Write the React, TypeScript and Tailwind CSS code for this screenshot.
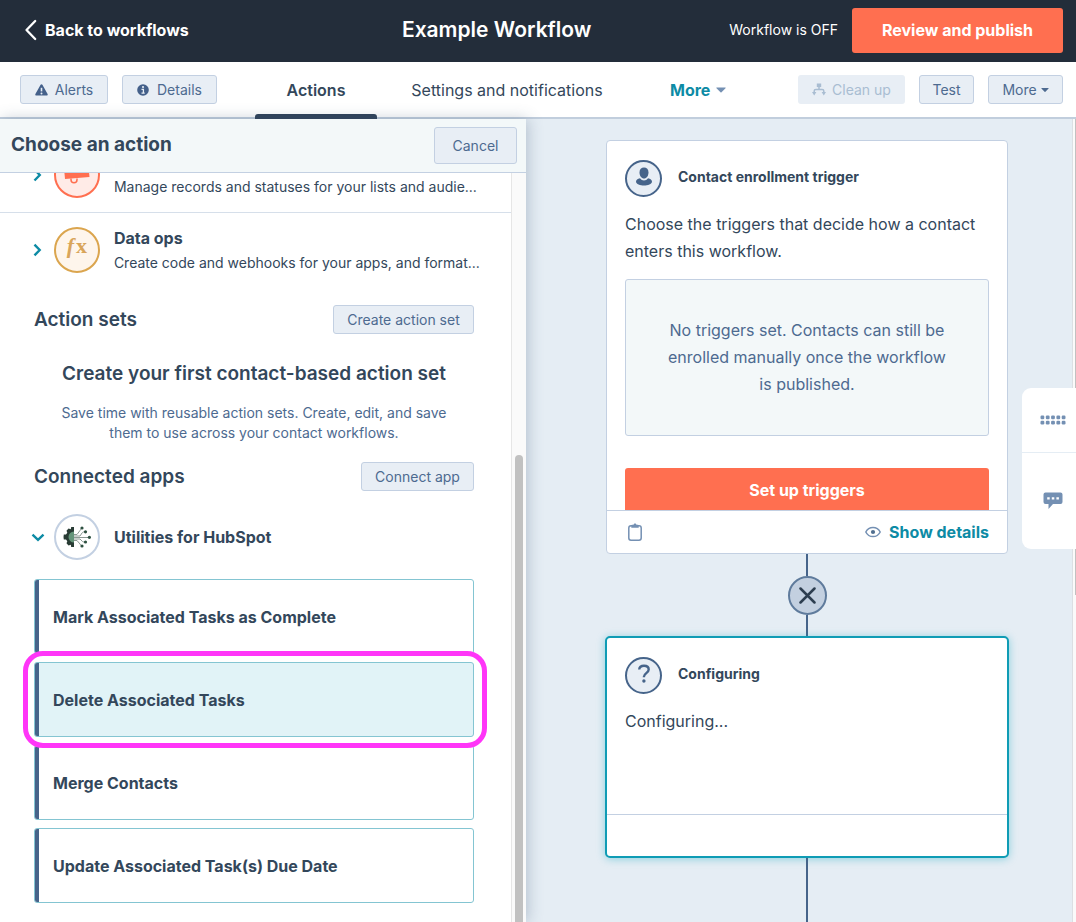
import React, { useState } from "react";

const softButton =
  "flex items-center justify-center rounded-[3px] border border-[#c3d0e2] bg-[#e8eef5] text-sm text-[#4d6a90] cursor-pointer";

const actions = [
  "Mark Associated Tasks as Complete",
  "Delete Associated Tasks",
  "Merge Contacts",
  "Update Associated Task(s) Due Date",
];

const Caret = ({ className = "" }: { className?: string }) => (
  <svg width="10" height="6" viewBox="0 0 10 6" className={className} aria-hidden="true">
    <path d="M0.8 0.5h8.4c.5 0 .6.4.3.7L5.5 5.2a.7.7 0 0 1-1 0L.5 1.2C.2.9.3.5.8.5z" fill="currentColor" />
  </svg>
);

const AlertIcon = () => (
  <svg width="13" height="12" viewBox="0 0 13 12" aria-hidden="true">
    <path d="M5.6.7a1 1 0 0 1 1.8 0l5.2 9.3c.4.8 0 1.6-.9 1.6H1.3c-.9 0-1.3-.8-.9-1.6z" fill="#44608a" />
    <path d="M6.5 3.8v3.6" stroke="#e8eef5" strokeWidth="1.6" />
    <circle cx="6.5" cy="9.5" r="1" fill="#e8eef5" />
  </svg>
);

const InfoIcon = () => (
  <svg width="12" height="12" viewBox="0 0 12 12" aria-hidden="true">
    <circle cx="6" cy="6" r="5.8" fill="#44608a" />
    <circle cx="6" cy="3" r="1.1" fill="#e8eef5" />
    <path d="M4.5 5.4h1.9v3.6M4.5 9.1h3.2" stroke="#e8eef5" strokeWidth="1.3" fill="none" />
  </svg>
);

const CleanUpIcon = () => (
  <svg width="14" height="13" viewBox="0 0 14 13" fill="none" aria-hidden="true">
    <path d="M4.8.5h4.4v3.6H4.8z" fill="#a9bdd2" />
    <path d="M7 3.5v3M2.2 9.500V8c0-1 .6-1.600 1.600-1.600h6.400c1 0 1.600.600 1.600 1.600v1.500" stroke="#a9bdd2" strokeWidth="1.500" />
    <path d="M0 9h4.400L2.200 12.500zM9.600 9H14l-2.200 3.500z" fill="#a9bdd2" />
  </svg>
);

const ChevronRight = () => (
  <svg width="9" height="14" viewBox="0 0 9 14" fill="none" aria-hidden="true">
    <path d="M1.5 1.5 6.800 7l-5.300 5.500" stroke="#0d8ba5" strokeWidth="2.400" />
  </svg>
);

const ChevronDown = () => (
  <svg width="14" height="9" viewBox="0 0 14 9" fill="none" aria-hidden="true">
    <path d="M1.500 1.700 7 6.800l5.500-5.100" stroke="#0d8ba5" strokeWidth="2.400" />
  </svg>
);

const MegaphoneIcon = () => (
  <svg width="30" height="28" viewBox="0 0 30 28" aria-hidden="true">
    <path d="M2 7 26 2l1.500 14L3 18z" fill="#ff6f50" />
    <path d="M9 17.500v1.200a3 3 0 0 0 6 0v-1.200" fill="none" stroke="#ff6f50" strokeWidth="1.500" />
  </svg>
);

const GearNetworkIcon = () => (
  <svg width="28" height="22" viewBox="0 0 28 22" fill="none" aria-hidden="true">
    <path d="M11 1v20H8.200L7.800 18.800 5.500 19.500 3.500 17.200l.800-2L3 13.500H.800L.500 11l.300-2.500H3l1.300-1.700-.800-2 2-2.300 2.300.700L8.200 1z" fill="#283b34" />
    <path d="M11 5.500v11a5.500 5.500 0 0 1 0-11z" fill="#64957a" />
    <g stroke="#8c9994" strokeWidth="1">
      <path d="M11 8.500h3l3-4c1-1.500 1-2 2-2.500M11 10h6l2-3c.800-1 1.500-1.200 3.500-1.200M11 11.500h15M11 13h6l2 2c.800 1 1.500 1 3.500 1M11 14.500h3l3 3.500c1 1.500 1 1.500 2 2" />
    </g>
    <g fill="#2d5040">
      <circle cx="19" cy="2" r="1.600" />
      <circle cx="22.500" cy="5.800" r="1.600" />
      <circle cx="26.400" cy="11.300" r="1.600" />
      <circle cx="22.500" cy="16" r="1.600" />
      <circle cx="19" cy="20" r="1.600" />
    </g>
  </svg>
);

const PersonIcon = () => (
  <svg width="18" height="20" viewBox="0 0 18 20" fill="#46648a" className="mb-1" aria-hidden="true">
    <path d="M9 .500c2.700 0 4.500 1.900 4.500 4.900 0 3.300-2 6.100-4.500 6.100S4.500 8.700 4.500 5.400C4.500 2.400 6.300.500 9 .500z" />
    <path d="M5 11.300c1.200 1.500 2.500 2.200 4 2.200s2.800-.700 4-2.200c2.500.400 4 1.700 4 3.500 0 2.400-4.300 3.700-8 3.700s-8-1.300-8-3.700c0-1.800 1.500-3.100 4-3.500z" />
  </svg>
);

const QuestionIcon = () => (
  <svg width="14" height="20" viewBox="0 0 14 20" fill="none" className="mb-1" aria-hidden="true">
    <path d="M2.200 5.500C2.400 3 4.400 1.700 7 1.700c2.700 0 4.700 1.400 4.700 3.800 0 3.600-4.800 3.600-4.800 7.200v.500" stroke="#46648a" strokeWidth="2.400" />
    <circle cx="6.900" cy="17" r="1.700" fill="#46648a" />
  </svg>
);

const ClipboardIcon = () => (
  <svg width="14" height="18" viewBox="0 0 14 18" fill="none" aria-hidden="true">
    <rect x="0.800" y="2.800" width="12.400" height="14.400" rx="2.200" stroke="#7490b3" strokeWidth="1.500" />
    <path d="M3.300 4.800V3c0-.700.500-1.200 1.200-1.200h1C5.800.900 6.300.500 7 .500s1.200.400 1.500 1.300h1c.700 0 1.200.500 1.200 1.200v1.800z" fill="#7490b3" />
  </svg>
);

const EyeIcon = () => (
  <svg width="16" height="12" viewBox="0 0 16 12" fill="none" aria-hidden="true">
    <path d="M.800 6C2.400 2.800 4.900 1.400 8 1.400S13.600 2.800 15.200 6c-1.600 3.200-4.100 4.600-7.200 4.600S2.400 9.200.800 6z" stroke="#7490b3" strokeWidth="1.500" />
    <circle cx="8" cy="6" r="2.100" fill="#516f90" />
  </svg>
);

const KeypadIcon = () => (
  <svg width="26" height="10" viewBox="0 0 26 10" fill="#7490b3" aria-hidden="true">
    {[0, 1, 2, 3, 4].map((i) => (
      <g key={i}>
        <rect x={0.5 + i * 5.3} y="0.500" width="3.800" height="3.800" rx="1.200" />
        <rect x={0.5 + i * 5.3} y="5.700" width="3.800" height="3.800" rx="1.200" />
      </g>
    ))}
  </svg>
);

const ChatIcon = () => (
  <svg width="20" height="18" viewBox="0 0 20 18" aria-hidden="true">
    <path d="M2.500.500h15a2 2 0 0 1 2 2V10a2 2 0 0 1-2 2H10l-4.500 5v-5h-3a2 2 0 0 1-2-2V2.500a2 2 0 0 1 2-2z" fill="#7490b3" />
    <path d="M4.200 5.200h2.500v2.300H4.200zM8.800 5.200h2.500v2.300H8.800zM13.400 5.200h2.500v2.300h-2.500z" fill="#fff" />
  </svg>
);

const TopBar = () => (
  <header className="flex h-[62px] shrink-0 items-center bg-[#232d3a] pr-[13px] pb-0.5 text-white">
    <div className="w-[264px] pl-6">
      <a href="#workflows" className="flex items-center gap-2 text-base font-bold whitespace-nowrap">
        <svg width="13" height="22" viewBox="0 0 13 22" fill="none" aria-hidden="true">
          <path d="M11.200 2 2.500 11l8.700 9" stroke="#fff" strokeWidth="2.300" strokeLinecap="round" strokeLinejoin="round" />
        </svg>
        Back to workflows
      </a>
    </div>
    <h1 className="flex-1 text-center text-[21px] font-semibold">Example Workflow</h1>
    <span className="mr-[14px] text-sm">Workflow is OFF</span>
    <button className="h-[45px] w-[211px] cursor-pointer rounded-[3px] bg-[#ff6f50] text-base font-bold">
      Review and publish
    </button>
  </header>
);

const Toolbar = () => (
  <nav className="flex h-[57px] shrink-0 items-center border-b-2 border-[#c1cedd] bg-white pr-[13px] pl-5 text-[#33475b]">
    <button className={`${softButton} h-[29px] w-[88px] gap-[7px]`}>
      <AlertIcon />
      Alerts
    </button>
    <button className={`${softButton} ml-[14px] h-[29px] w-[95px] gap-2`}>
      <InfoIcon />
      Details
    </button>
    <a href="#actions" className="relative ml-[38px] flex h-full w-[122px] items-center justify-center text-base font-semibold">
      Actions
      <span className="absolute inset-x-0 -bottom-0.5 h-[5px] rounded-t-[3px] bg-[#2f4259]" />
    </a>
    <a href="#settings" className="ml-8 w-[196px] text-center text-base whitespace-nowrap">
      Settings and notifications
    </a>
    <button className="ml-[65px] flex cursor-pointer items-center gap-1.5 text-base font-bold text-[#0d8ba5]">
      More
      <Caret className="text-[#7490b3]" />
    </button>
    <div className="ml-auto flex gap-[14px]">
      <button disabled className="flex h-[29px] w-[107px] items-center justify-center gap-1.5 rounded-[3px] bg-[#e8eef5] text-sm text-[#a9bdd2]">
        <CleanUpIcon />
        Clean up
      </button>
      <button className={`${softButton} h-[29px] w-[55px]`}>Test</button>
      <button className={`${softButton} h-[29px] w-[75px] gap-1`}>
        More
        <Caret className="w-2" />
      </button>
    </div>
  </nav>
);

const ActionPanel = () => {
  const [selected, setSelected] = useState<string>("Delete Associated Tasks");

  return (
    <aside className="z-10 flex w-[526px] shrink-0 flex-col bg-white shadow-[2px_0_14px_rgba(66,91,118,0.3)]">
      <div className="flex h-[54px] shrink-0 items-center justify-between border-b border-[#c3d0e2] bg-[#f3f8f9] pr-[9px] pl-[11px]">
        <h2 className="text-[19px] font-bold">Choose an action</h2>
        <button className={`${softButton} h-[37px] w-[83px]`}>Cancel</button>
      </div>

      <div className="flex min-h-0 flex-1">
        <div className="min-w-0 flex-1 overflow-hidden">
          {/* top row is scrolled halfway under the panel header */}
          <div className="flex h-10 items-end overflow-hidden border-b border-[#d6dfea]">
            <div className="flex h-[75px] w-full shrink-0 items-center pr-9 pl-[33px]">
              <ChevronRight />
              <div className="ml-3 flex size-[46px] shrink-0 items-center justify-center rounded-full border-2 border-[#ff6f50] bg-[#ffebe7]">
                <MegaphoneIcon />
              </div>
              <div className="ml-[14px] min-w-0 pt-6">
                <div className="text-sm leading-[25px] whitespace-nowrap">Manage records and statuses for your lists and audie...</div>
              </div>
            </div>
          </div>

          <div className="flex h-[74px] items-center pr-9 pl-[33px]">
            <ChevronRight />
            <div className="ml-3 flex size-[46px] shrink-0 items-center justify-center rounded-full border-2 border-[#dba54e] bg-[#fef5ec]">
              <span className="pb-2 font-['Liberation_Serif',serif] text-[22px] leading-6 font-bold text-[#d9a55a]">
                <i className="mr-0.5">f</i>x
              </span>
            </div>
            <div className="ml-[14px] min-w-0">
              <div className="text-base leading-6 font-bold">Data ops</div>
              <div className="text-sm leading-[25px] whitespace-nowrap">Create code and webhooks for your apps, and format...</div>
            </div>
          </div>

          <section className="pr-[37px] pl-[34px]">
            <div className="mt-[18px] flex items-center justify-between">
              <h3 className="text-[19px] leading-7 font-semibold">Action sets</h3>
              <button className={`${softButton} h-[29px] w-[141px]`}>Create action set</button>
            </div>
            <div className="mt-[26px] text-center">
              <h4 className="text-[19px] leading-7 font-semibold">Create your first contact-based action set</h4>
              <p className="mt-[15px] text-sm leading-5 text-[#4d6a90]">
                Save time with reusable action sets. Create, edit, and save
                <br />
                them to use across your contact workflows.
              </p>
            </div>
          </section>

          <section className="pr-[37px] pl-[34px]">
            <div className="mt-[19px] flex items-center justify-between">
              <h3 className="text-[19px] leading-7 font-semibold">Connected apps</h3>
              <button className={`${softButton} h-[29px] w-[113px]`}>Connect app</button>
            </div>
            <button className="mt-[23px] flex cursor-pointer items-center text-base font-bold">
              <span className="-ml-[3px]">
                <ChevronDown />
              </span>
              <span className="mr-[14px] ml-[9px] flex size-[46px] items-center justify-center rounded-full border-2 border-[#c3d0e2]">
                <GearNetworkIcon />
              </span>
              Utilities for HubSpot
            </button>

            <ul className="mt-[19px] flex flex-col gap-2">
              {actions.map((action) => (
                <li key={action} className="relative">
                  <button
                    onClick={() => setSelected(action)}
                    className={`flex h-[75px] w-full cursor-pointer items-center overflow-hidden rounded-[3px] border border-[#84c5d2] text-left text-base font-bold ${
                      selected === action ? "bg-[#e1f3f7]" : "bg-white"
                    }`}
                  >
                    <span className="mr-[14px] h-full w-1 bg-[#46648a]" />
                    {action}
                  </button>
                  {selected === action && (
                    <span className="pointer-events-none absolute -top-[11px] -right-[13px] -bottom-[11px] -left-[11px] z-10 rounded-[20px] border-[5px] border-[#ff35f8]" />
                  )}
                </li>
              ))}
            </ul>
          </section>
        </div>

        <div className="flex w-[15px] shrink-0 flex-col items-center border-l border-[#e6e6e6] bg-[#fafafa] pt-[282px]">
          <div className="w-2 flex-1 rounded-t-full bg-[#c1c1c1]" />
        </div>
      </div>
    </aside>
  );
};

const Canvas = () => (
  <main className="flex min-w-0 flex-1 bg-[#e5edf4]">
    <div className="flex min-w-0 flex-1 flex-col items-center overflow-hidden pt-[21px] pl-4">
      <section className="flex h-[414px] w-[402px] shrink-0 flex-col rounded-[4px] border border-[#c3d0e2] bg-white">
        <div className="min-h-0 flex-1 overflow-hidden px-[18px] pt-[19px]">
          <div className="flex items-center gap-4">
            <div className="flex size-[37px] items-center justify-center rounded-full border-2 border-[#46648a] bg-[#e8eef5]">
              <PersonIcon />
            </div>
            <h3 className="pb-1 text-sm font-bold">Contact enrollment trigger</h3>
          </div>
          <p className="mt-[14px] text-base leading-[27px] whitespace-nowrap">
            Choose the triggers that decide how a contact
            <br />
            enters this workflow.
          </p>
          <div className="mt-[14px] flex h-[157px] items-center justify-center rounded-[3px] border border-[#c3d0e2] bg-[#f3f8f9] text-center text-base leading-[27px] whitespace-nowrap text-[#4d6a90]">
            <p>
              No triggers set. Contacts can still be
              <br />
              enrolled manually once the workflow
              <br />
              is published.
            </p>
          </div>
          <button className="mt-8 h-11 w-full cursor-pointer rounded-[3px] bg-[#ff6f50] text-base font-bold text-white">
            Set up triggers
          </button>
        </div>
        <div className="flex h-[43px] shrink-0 items-center justify-between border-t border-[#c3d0e2] px-[18px]">
          <button aria-label="Copy" className="ml-[3px] cursor-pointer">
            <ClipboardIcon />
          </button>
          <button className="flex cursor-pointer items-center gap-2 text-base font-bold text-[#0d8ba5]">
            <EyeIcon />
            Show details
          </button>
        </div>
      </section>

      <div className="h-[22px] w-0.5 shrink-0 bg-[#46648a]" />
      <button aria-label="Remove step" className="flex size-[39px] shrink-0 cursor-pointer items-center justify-center rounded-full border-2 border-[#5f7b9c] bg-[#c3d0e0]">
        <svg width="17" height="17" viewBox="0 0 17 17" aria-hidden="true">
          <path d="M1.500 1.500l14 14M15.500 1.500l-14 14" stroke="#2d3e50" strokeWidth="2.500" strokeLinecap="round" />
        </svg>
      </button>
      <div className="h-[21px] w-0.5 shrink-0 bg-[#46648a]" />

      <section className="flex h-[222px] w-[404px] shrink-0 flex-col rounded-[5px] border-2 border-[#0f9cb5] bg-white shadow-[0_1px_8px_rgba(0,164,189,0.4)]">
        <div className="flex-1 px-[18px] pt-[19px]">
          <div className="flex items-center gap-4">
            <div className="flex size-[37px] items-center justify-center rounded-full border-2 border-[#46648a] bg-[#e8eef5]">
              <QuestionIcon />
            </div>
            <h3 className="pb-1 text-sm font-bold">Configuring</h3>
          </div>
          <p className="mt-[14px] text-base leading-[27px]">Configuring...</p>
        </div>
        <div className="h-[42px] border-t border-[#c3d0e2]" />
      </section>
      <div className="w-0.5 flex-1 bg-[#46648a]" />
    </div>

    <div className="w-1 shrink-0 border-l border-[#dcdfe3] bg-[#fafafa]">
      <div className="ml-auto h-[476px] w-px bg-[#c1c1c1]" />
    </div>

    <div className="absolute top-[388px] right-0 w-[54px] overflow-hidden rounded-l-[9px] bg-white">
      <button aria-label="Keypad" className="flex h-[65px] w-full cursor-pointer items-center justify-center border-b border-[#e5edf4] pl-2">
        <KeypadIcon />
      </button>
      <button aria-label="Chat" className="flex h-24 w-full cursor-pointer items-center justify-center pl-2">
        <ChatIcon />
      </button>
    </div>
  </main>
);

const App = () => {
  return (
    <div className="relative flex h-screen flex-col overflow-hidden font-[Inter,sans-serif] text-[#33475b]">
      <TopBar />
      <Toolbar />
      <div className="flex min-h-0 flex-1">
        <ActionPanel />
        <Canvas />
      </div>
    </div>
  );
};

export default App;
